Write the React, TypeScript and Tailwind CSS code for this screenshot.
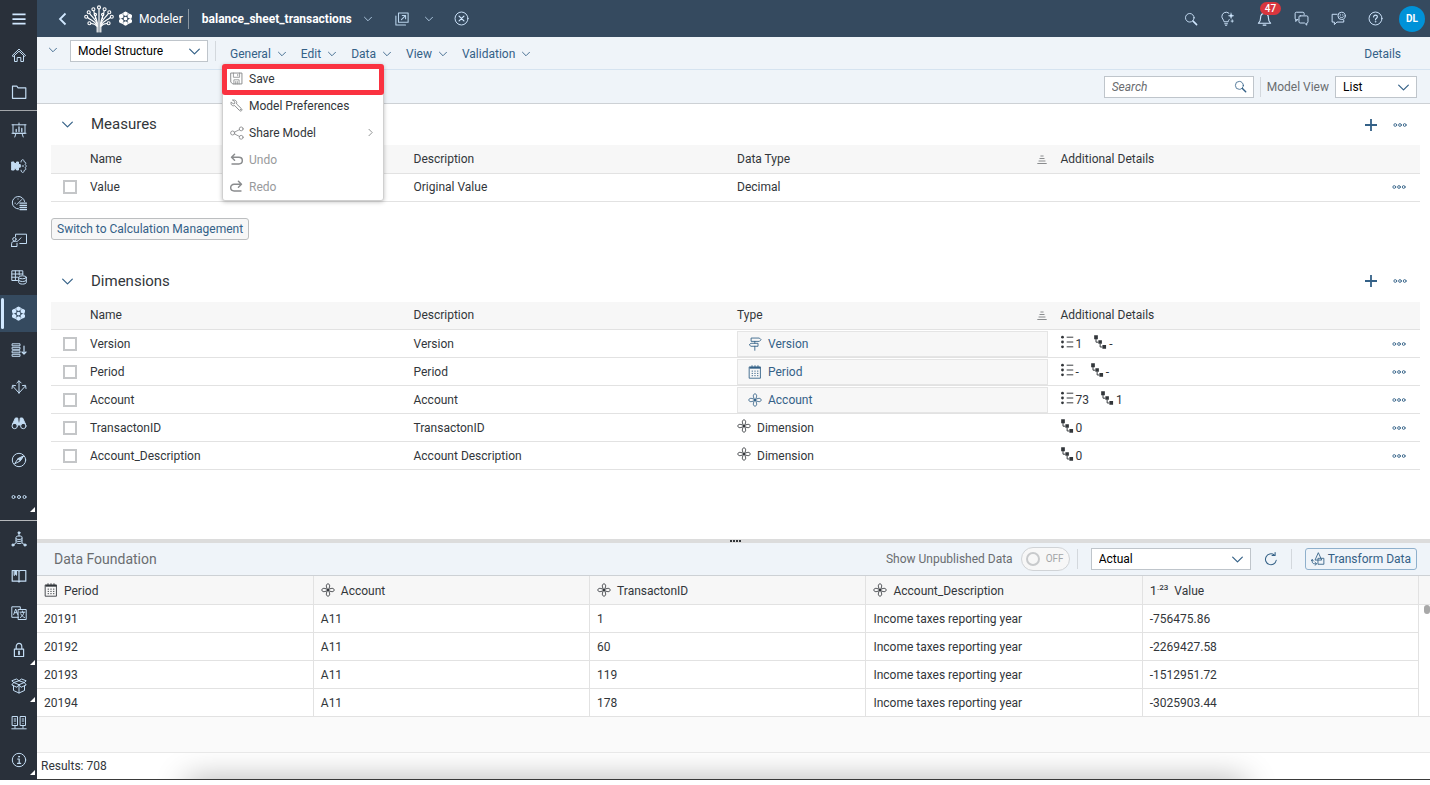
import { useState, type ReactNode } from 'react';
import clsx from 'clsx';

interface IconProps {
  className?: string;
}

function Svg({ className = 'size-4', children }: IconProps & { children: ReactNode }) {
  return (
    <svg
      viewBox="0 0 16 16"
      className={clsx('shrink-0', className)}
      fill="none"
      stroke="currentColor"
      strokeWidth="1"
      strokeLinecap="round"
      strokeLinejoin="round"
      aria-hidden="true"
    >
      {children}
    </svg>
  );
}

// General purpose icons

function ChevronDown({ className = 'w-2 h-2' }: IconProps) {
  return (
    <svg viewBox="0 0 10 6" className={clsx('shrink-0', className)} fill="none" stroke="currentColor" strokeLinecap="round" strokeLinejoin="round" aria-hidden="true">
      <path d="M0.6 0.8 5 5.2 9.4 0.8" strokeWidth="1.1" />
    </svg>
  );
}

function MoreIcon({ className }: IconProps) {
  return (
    <Svg className={className}>
      <circle cx="2.6" cy="8" r="1.6" />
      <circle cx="8" cy="8" r="1.6" />
      <circle cx="13.4" cy="8" r="1.6" />
    </Svg>
  );
}

function PlusIcon({ className }: IconProps) {
  return (
    <Svg className={className}>
      <path d="M8 2v12M2 8h12" strokeWidth="1.8" strokeLinecap="butt" />
    </Svg>
  );
}

function SearchIcon({ className }: IconProps) {
  return (
    <Svg className={className}>
      <circle cx="6.6" cy="6.6" r="4.9" />
      <path d="m10.4 10.4 4 4" strokeWidth="1.8" />
    </Svg>
  );
}

function FlowerIcon({ className }: IconProps) {
  return (
    <Svg className={className}>
      <path d="M8 8C6.800 6.400 6.100 4.800 6.100 3.200 6.100 1.900 6.900 1 8 1s1.900.9 1.900 2.200C9.900 4.800 9.200 6.400 8 8Z" />
      <path d="M8 8c-1.200 1.600-1.900 3.200-1.900 4.800C6.100 14.100 6.900 15 8 15s1.900-.9 1.900-2.200C9.900 11.200 9.200 9.600 8 8Z" />
      <path d="M8 8C6.400 6.800 4.800 6.100 3.200 6.100 1.900 6.100 1 6.900 1 8s.9 1.900 2.200 1.900C4.800 9.900 6.400 9.200 8 8Z" />
      <path d="M8 8c1.600-1.200 3.200-1.900 4.800-1.900 1.300 0 2.200.8 2.200 1.900s-.9 1.900-2.200 1.900C11.200 9.900 9.600 9.200 8 8Z" />
    </Svg>
  );
}

function CalendarIcon({ className }: IconProps) {
  return (
    <Svg className={className}>
      <path d="M1.800 2.200h12.400v12.900H1.800z" />
      <path d="M1.800 3.200h12.400" strokeWidth="2" strokeLinecap="butt" />
      <path d="M4.600.7v1.500M8 .7v1.500M11.400.7v1.500" />
      <path d="M4.200 7h1.400M7.300 7h1.400M10.400 7h1.400M4.200 9.600h1.400M7.300 9.600h1.400M10.400 9.600h1.400M4.200 12.200h1.400M7.300 12.200h1.400M10.400 12.200h1.400" strokeWidth="1.100" strokeLinecap="butt" />
    </Svg>
  );
}

function SignpostIcon({ className }: IconProps) {
  return (
    <Svg className={className}>
      <path d="M4 1.200h9l1.900 1.900L13 5H4z" />
      <path d="M11 7.200H3.400L1.400 8.900l2 1.700H11z" />
      <path d="M7.800 5v2.200M7.800 10.600v4.600" />
    </Svg>
  );
}

function BulletListIcon({ className }: IconProps) {
  return (
    <Svg className={className}>
      <g fill="currentColor" stroke="none">
        <circle cx="1.700" cy="2.500" r="1.600" />
        <circle cx="1.700" cy="8" r="1.600" />
        <circle cx="1.700" cy="13.500" r="1.600" />
      </g>
      <path d="M6.500 2.500H14M6.500 8H14M6.500 13.500H14" strokeWidth="1.100" strokeLinecap="butt" />
    </Svg>
  );
}

function HierarchyIcon({ className }: IconProps) {
  return (
    <Svg className={className}>
      <g fill="currentColor" stroke="none">
        <path d="M.2.400h4.200v4.400H.2zM5 6h4v4H5zM9.600 11.400h4.200v4.400H9.600z" />
      </g>
      <path d="M2.300 4.600v3.600H5M7 10v3.700h2.600" strokeWidth="1.100" strokeLinecap="butt" />
    </Svg>
  );
}

function SortIcon({ className }: IconProps) {
  return (
    <Svg className={className}>
      <path d="M5.500 3.200h5M4 7.200h8M2.500 11.200h11M.500 15.200h15" strokeWidth="1.600" strokeLinecap="butt" />
    </Svg>
  );
}

function RefreshIcon({ className }: IconProps) {
  return (
    <Svg className={className}>
      <path d="M14 9.400A6.200 6.200 0 1 1 11.700 3.400" strokeWidth="1.200" />
      <path d="M9.200 3.900h3.500V.6" strokeWidth="1.200" />
    </Svg>
  );
}

function TransformIcon({ className }: IconProps) {
  return (
    <Svg className={className}>
      <path d="M8.200 1.200 4.600 9.200h7.200z" />
      <path d="M8.400 7.200h6.300V14H8.400z" />
      <path d="M1.400 8.800v1.800c0 1.900 1 2.900 2.900 2.900h1.900M4.600 11.800l1.800 1.700-1.800 1.700" />
      <path d="M.2 10.200l1.200-1.600 1.300 1.600" />
    </Svg>
  );
}

// Shell header icons

function TreeLogo() {
  return (
    <svg viewBox="0 0 30 28" className="w-[30px] h-7 shrink-0" fill="none" stroke="currentColor" strokeWidth="1.200" strokeLinecap="round" aria-hidden="true">
      <path d="M15 4v23M13.200 27V17.500C12.500 13.500 10.500 10.500 9.800 6M16.800 27V17.500c.7-4 2.700-7 3.400-11.500" />
      <path d="M13.200 19C12 14.500 8.500 12.500 5.600 8.500M16.800 19c1.200-4.500 4.700-6.500 7.600-10.500" />
      <path d="M13.200 20.500C11 16 7 15.500 3.600 12.500M16.800 20.500c2.200-4.500 6.200-5 9.600-8" />
      <path d="M13.200 21.500C11 18.500 9 18.500 7 18.500M16.800 21.500c2.200-3 4.200-3 6.200-3" />
      <path d="M11.500 13.500V11M18.500 13.500V11" />
      <g strokeWidth="1.100">
        <circle cx="15" cy="2.400" r="1.500" />
        <circle cx="9.400" cy="4.300" r="1.500" />
        <circle cx="20.600" cy="4.300" r="1.500" />
        <circle cx="4.700" cy="7.200" r="1.500" />
        <circle cx="25.300" cy="7.200" r="1.500" />
        <circle cx="2.200" cy="11.800" r="1.500" />
        <circle cx="27.800" cy="11.800" r="1.500" />
        <circle cx="5.400" cy="18.200" r="1.500" />
        <circle cx="24.600" cy="18.200" r="1.500" />
        <circle cx="11.300" cy="9.600" r="1.200" />
        <circle cx="18.700" cy="9.600" r="1.200" />
      </g>
    </svg>
  );
}

// Six hexagonal nodes packed around a seventh one
function ModelerIcon({ className }: IconProps) {
  return (
    <Svg className={className}>
      <g fill="currentColor" stroke="none">
        <path d="m8 .400 2.300 1.300v2.500L8 5.400 5.700 4.200V1.700z" />
        <path d="m12.600 3 2.300 1.300v2.500l-2.300 1.300-2.300-1.300V4.300z" />
        <path d="m12.600 8.300 2.300 1.300v2.500l-2.300 1.300-2.300-1.300V9.600z" />
        <path d="m8 10.800 2.300 1.300v2.500L8 15.800l-2.300-1.200v-2.500z" />
        <path d="m3.400 8.300 2.300 1.300v2.500l-2.300 1.300-2.300-1.300V9.600z" />
        <path d="m3.400 3 2.300 1.300v2.500L3.400 8.100 1.100 6.800V4.300z" />
        <path d="m8 6 1.800 1v2.200L8 10.200l-1.800-1V7z" />
      </g>
      <path d="m5.700 2.600-1.800 1M10.300 2.600l1.800 1M13.600 7v2.400M2.400 7v2.400M5.700 13.600l-1.800-1M10.300 13.600l1.800-1" strokeWidth="1.200" strokeLinecap="butt" />
    </Svg>
  );
}

function OpenWindowIcon({ className }: IconProps) {
  return (
    <Svg className={className}>
      <path d="M4 1.200h11v10.600H4z" strokeWidth="1.200" />
      <path d="M1 4.500v10.300h11" strokeWidth="1.200" />
      <path d="M7.300 8.800 11.700 4.400M8.300 4h3.800v3.800" strokeWidth="1.200" />
    </Svg>
  );
}

function CloseCircleIcon({ className }: IconProps) {
  return (
    <Svg className={className}>
      <circle cx="8" cy="8" r="6.900" />
      <path d="m5.400 5.400 5.200 5.200M10.600 5.400l-5.200 5.200" strokeWidth="1.300" />
    </Svg>
  );
}

function BulbIcon({ className }: IconProps) {
  return (
    <Svg className={className}>
      <path d="M9.500 2.300A4.600 4.600 0 0 0 2 6c0 2 1.900 3 2.300 5.500h4.400c.2-1 .6-1.700 1.100-2.400" />
      <path d="M5 13.600h3M5.800 15.200h1.400" />
      <path d="M11.800 2l.8 2.300 2.300.8-2.300.8-.8 2.300-.8-2.300-2.300-.8 2.300-.8z" fill="currentColor" strokeWidth="0.300" />
      <path d="M13 9l.4 1.300 1.300.4-1.300.4-.4 1.300-.4-1.300-1.300-.4 1.300-.4z" fill="currentColor" strokeWidth="0.300" />
    </Svg>
  );
}

function BellIcon({ className }: IconProps) {
  return (
    <Svg className={className}>
      <path d="M1.500 13c1.700-1.200 2.300-2.600 2.300-5.500C3.800 4.500 5.500 2.500 8 2.500s4.200 2 4.200 5c0 2.900.6 4.300 2.300 5.500z" strokeWidth="1.200" />
      <path d="M6.500 15h3" strokeWidth="1.200" />
    </Svg>
  );
}

function ChatIcon({ className }: IconProps) {
  return (
    <Svg className={className}>
      <path d="M3.800 9.200H2.500c-.8 0-1.300-.5-1.300-1.300V2.600c0-.8.5-1.300 1.300-1.300h7c.8 0 1.300.5 1.300 1.300v1.200" />
      <path d="M1.900 9.200v2l2-2" />
      <path d="M6.600 5.200h7c.8 0 1.300.5 1.300 1.300v5c0 .8-.5 1.300-1.300 1.300v2.300l-2.400-2.300H6.600c-.8 0-1.300-.5-1.300-1.300v-5c0-.8.500-1.300 1.300-1.300z" />
    </Svg>
  );
}

function FeedbackIcon({ className }: IconProps) {
  return (
    <Svg className={className}>
      <path d="M6.500 3.500H1.200v8.300h2.400v2.700l2.700-2.700h7.300v-2" />
      <circle cx="11.300" cy="5.200" r="3.900" />
      <path d="M9.400 6.200c.9 1.300 2.900 1.300 3.800 0" />
      <path d="M10 4v.3M12.600 4v.3" strokeWidth="1.200" />
    </Svg>
  );
}

function HelpIcon({ className }: IconProps) {
  return (
    <Svg className={className}>
      <circle cx="8" cy="8" r="6.900" />
      <path d="M6 6.400c0-1.300.8-2 2-2s2 .7 2 1.800c0 1.500-2 1.500-2 3.200" strokeWidth="1.200" />
      <circle cx="8" cy="11.500" r="0.500" fill="currentColor" strokeWidth="0.500" />
    </Svg>
  );
}

// Menu icons

function SaveIcon({ className }: IconProps) {
  return (
    <Svg className={className}>
      <path d="M1.300 1.300h13.400v13.400H3.300l-2-2z" strokeWidth="1.200" />
      <path d="M4.200 1.300v5.200h7.600V1.300M9.500 3v1.800" />
      <path d="M4.800 14.700V9.600h6.400v5.100M7 11.800v2.900M9 11.800v2.900" />
    </Svg>
  );
}

function WrenchIcon({ className }: IconProps) {
  return (
    <Svg className={className}>
      <path d="M3.600 1.400 6 3.800 5.700 5.600l-1.800.4L1.500 3.600C.8 5.600 1.400 7.300 2.800 8c1 .5 2 .5 3 .1l6 6.200c.8.800 1.800.7 2.400.1.700-.7.700-1.700-.1-2.500L8 6c.4-1.100.4-2.200-.2-3.200C7 1.500 5.500.8 3.600 1.400z" strokeWidth="1.200" />
      <circle cx="12.900" cy="13" r="0.400" />
    </Svg>
  );
}

function ShareIcon({ className }: IconProps) {
  return (
    <Svg className={className}>
      <circle cx="3" cy="8" r="2.300" />
      <circle cx="12.800" cy="3.300" r="2.200" />
      <circle cx="12.800" cy="12.900" r="2.200" />
      <path d="m5.100 7 5.700-2.800M5.100 9l5.800 3" />
    </Svg>
  );
}

function UndoIcon({ className }: IconProps) {
  return (
    <Svg className={className}>
      <path d="M2 5.200h9a3.900 3.900 0 0 1 0 8.300H2.500M5.600 1.600 1.900 5.200l3.700 3.600" strokeWidth="1.800" />
    </Svg>
  );
}

function RedoIcon({ className }: IconProps) {
  return (
    <Svg className={className}>
      <path d="M14 5.200H5a3.900 3.900 0 0 0 0 8.300h8.500M10.400 1.600l3.700 3.600-3.700 3.600" strokeWidth="1.800" />
    </Svg>
  );
}

// Side navigation

interface NavItem {
  label: string;
  icon: ReactNode;
  expandable?: boolean;
}

const mainNav: NavItem[] = [
  {
    label: 'Home',
    icon: <path d="M1.400 8.500 8 2l6.600 6.500-1 .9L8 4.200 2.400 9.400zM3.500 9v5.500h2.700v-4h3.600v4h2.700V9" />,
  },
  { label: 'Files', icon: <path d="M1.500 14.300V2.200h4.300l1.300 1.700h7.700v10.400z" strokeWidth="1.200" /> },
];

const appNav: NavItem[] = [
  {
    label: 'Stories',
    icon: (
      <>
        <path d="M1 2.800h14M2 2.800v8.500h12V2.800M1 11.300h14M8 1v1.800M5 11.300 3.800 15M11 11.300l1.200 3.700" />
        <path d="M5.200 9.500V7.500M8 9.500V5M10.800 9.500V6.500" strokeWidth="1.300" />
      </>
    ),
  },
  {
    label: 'Analytic Applications',
    icon: (
      <>
        <path d="M1 4h2v1.500h2.500V4h2v2.600h1.800v2.600H7.500V12h-2v-1.200H3.200V12H1z" fill="currentColor" />
        <path d="M10 4c0-3 3.200-3 3.200-.2 1.700.3 2.100 1.500 1 2.700 1.300 1 1.300 2.200 0 3.200 1.100 1.200.7 2.400-1 2.700 0 2.800-3.200 2.800-3.200-.2M11.200 8h1.400" />
      </>
    ),
  },
  {
    label: 'Data Analyzer',
    icon: (
      <>
        <path d="M7.500 13.900A6.200 6.200 0 1 1 13.600 6.500M5.800 9.500l5-5M4 8.200h.4M7 3.800v.3" />
        <path d="M9 8.200h6.500M9 10.300h6.500M9 12.400h6.500M9 14.500h6.500" strokeWidth="1.300" />
      </>
    ),
  },
  {
    label: 'Digital Boardroom',
    icon: (
      <>
        <path d="M4.500 4.500V2.200h11v9.300H8.800" />
        <circle cx="3.400" cy="7.200" r="1.700" />
        <path d="M.6 14.500v-2.800c0-1.500 1-2.200 2.600-2.200 2 0 3 .2 4-.8L10 5.800M6 11.300v3.200H.6" />
      </>
    ),
  },
  {
    label: 'Datasets',
    icon: (
      <>
        <path d="M6.500 11.500H.8V1.800h11v4M.8 5h11M.8 8.200h5.700M4.400 1.800v9.700M8.200 1.800V6" />
        <ellipse cx="11.500" cy="8.300" rx="3.800" ry="1.500" />
        <path d="M7.700 8.300v5.200c0 .9 1.700 1.600 3.800 1.600s3.800-.7 3.800-1.600V8.300M7.700 11c0 .8 1.700 1.500 3.800 1.500s3.800-.7 3.800-1.500" />
      </>
    ),
  },
  { label: 'Modeler', icon: null },
  {
    label: 'Data Actions',
    icon: (
      <>
        <path d="M1.500 1.800h7.500v2H1.500zM1.500 5.300h7.500v2H1.500zM1.500 8.800h7.500v2H1.500zM1.500 12.300h7.500v2H1.500z" />
        <path d="M13 4v8M11 10l2 2 2-2" strokeWidth="1.200" />
      </>
    ),
  },
  {
    label: 'Allocations',
    icon: (
      <path d="M8 2v12M5.800 4 8 1.800 10.200 4M8 14 1.800 7.200M8 14l6.200-6.800M1 9.500 1.500 6.300l3 .3M15 9.500l-.5-3.200-3 .3" />
    ),
  },
  {
    label: 'Explorer',
    icon: (
      <>
        <circle cx="3.700" cy="11" r="2.700" />
        <circle cx="12.300" cy="11" r="2.700" />
        <path d="M1.600 9 4.400 3h2.300l.6 5h1.400l.6-5h2.300l2.800 6c-1.400-1.300-3.600-1-4.900 1h-3C5.200 8 3 7.700 1.600 9z" fill="currentColor" />
      </>
    ),
  },
  {
    label: 'Discover',
    icon: (
      <>
        <circle cx="8" cy="8" r="6.700" />
        <path d="M12.400 4.200 9.200 9 3.600 11.800l3.200-4.800z" />
        <path d="M12.400 4.200 9.200 9 6.800 7z" fill="currentColor" strokeWidth="0.500" />
      </>
    ),
  },
  {
    label: 'More',
    expandable: true,
    icon: (
      <>
        <circle cx="2.500" cy="8" r="1.500" />
        <circle cx="8" cy="8" r="1.500" />
        <circle cx="13.500" cy="8" r="1.500" />
      </>
    ),
  },
];

const adminNav: NavItem[] = [
  {
    label: 'Connections',
    icon: (
      <>
        <path d="M8 1.800V5M4.800 12 2.500 13.800M11.200 12l2.300 1.800" />
        <path d="M5 6c0-1.500 6-1.500 6 0v5.500c0 1.500-6 1.500-6 0zM5 7.800c1 1 5 1 6 0M5 9.800c1 1 5 1 6 0" />
        <circle cx="8" cy="1.800" r="1" fill="currentColor" />
        <circle cx="2" cy="14" r="1.100" fill="currentColor" />
        <circle cx="14" cy="14" r="1.100" fill="currentColor" />
      </>
    ),
  },
  {
    label: 'Catalog',
    icon: (
      <>
        <path d="M1.200 2.500H7l1 .8 1-.8h5.800v10.700H9l-1 .8-1-.8H1.200zM8 3.300V14" strokeWidth="1.200" />
        <path d="M3.400 2.500h2.200v4.800L4.500 6.300l-1.100 1z" fill="currentColor" />
      </>
    ),
  },
  {
    label: 'Translation',
    icon: (
      <>
        <path d="M7.500 12.300H.8V1.800h8.500v2.700" />
        <path d="m2.700 9.500 2-5.500 2 5.500M3.400 7.700H6" />
        <path d="M7.500 4.500h7.700v10H7.500zM9 7.200h4.800M11.400 6v1.200M9.400 12.500c2-1 3.200-3 3.400-5.300M9.800 8.800c.8 1.800 2 3 3.700 3.700" />
      </>
    ),
  },
  {
    label: 'Security',
    expandable: true,
    icon: (
      <>
        <path d="M3.400 7.200h9.200v7.300H3.400zM5.200 7.200V4.700c0-2 1.100-3.300 2.800-3.300s2.800 1.300 2.800 3.300v2.500" strokeWidth="1.200" />
        <path d="M8 9.500v2.800" strokeWidth="1.800" />
      </>
    ),
  },
  {
    label: 'Deployment',
    expandable: true,
    icon: (
      <path d="M8 6.700 2.700 4.500.8 7 6 9.300 8 6.700l2 2.600L15.200 7l-1.900-2.500L8 6.700M2.500 8v4.500L8 15l5.500-2.500V8M8 8v7M2.700 4.500.8 2.800 5.500 1 8 2.800 10.500 1l4.700 1.800-1.900 1.700M8 2.800 2.700 4.500M8 2.800l5.300 1.700" />
    ),
  },
  {
    label: 'Data Administration',
    icon: (
      <>
        <path d="M1.500 1.500h5v9h-5zM9.500 1.500h5v9h-5zM4 10.500V13M12 10.500V13M.8 13.800h14.400" />
        <path d="M3.200 4h1.600M3.200 6h1.600M11.200 4h1.600M11.200 6h1.600M4 8.500v.2M12 8.500v.2" />
      </>
    ),
  },
  {
    label: 'About',
    expandable: true,
    icon: (
      <>
        <circle cx="8" cy="8" r="6.700" />
        <path d="M6.700 7h1.500v4.300M6.500 11.300h3.200" strokeWidth="1.200" />
        <circle cx="8" cy="4.700" r="0.500" fill="currentColor" />
      </>
    ),
  },
];

function NavButton({ item, selected }: { item: NavItem; selected?: boolean }) {
  return (
    <button
      type="button"
      aria-label={item.label}
      className={clsx(
        'relative flex flex-1 w-full items-center justify-center',
        selected ? 'bg-[#354a5f] text-[#d1e8ff]' : 'text-[#c3dcf3]'
      )}
    >
      {selected && <span className="absolute left-[1px] inset-y-[3px] w-[3px] rounded-sm bg-[#d1e8ff]" />}
      {item.icon ? <Svg className="size-4">{item.icon}</Svg> : <ModelerIcon className="size-[15px]" />}
      {item.expandable && (
        <svg viewBox="0 0 5 5" className="absolute right-[2px] bottom-[3px] size-[5px]" fill="#ffffff" aria-hidden="true">
          <path d="M5 0v5H0z" />
        </svg>
      )}
    </button>
  );
}

function SideNav() {
  return (
    <nav className="flex flex-col w-[37px] shrink-0 bg-[#29303a] pb-[2px]" aria-label="Main">
      <button type="button" aria-label="Menu" className="flex h-[37px] shrink-0 items-center justify-center text-[#d1e8ff]">
        <Svg className="size-[14px]">
          <path d="M.5 2.700h15M.5 8h15M.5 13.300h15" strokeWidth="2" strokeLinecap="butt" />
        </Svg>
      </button>
      {mainNav.map((item) => (
        <NavButton key={item.label} item={item} />
      ))}
      <div className="h-px shrink-0 bg-[#a3a6aa]" />
      {appNav.map((item) => (
        <NavButton key={item.label} item={item} selected={item.label === 'Modeler'} />
      ))}
      <div className="mt-[5px] h-px shrink-0 bg-[#b5b8bb]" />
      {adminNav.map((item) => (
        <NavButton key={item.label} item={item} />
      ))}
    </nav>
  );
}

function ShellHeader() {
  const actions = [
    { label: 'Search', icon: <SearchIcon className="size-[14px]" /> },
    { label: 'Insights', icon: <BulbIcon className="size-[15px]" /> },
    { label: 'Notifications', icon: <BellIcon className="size-[15px]" />, badge: '47' },
    { label: 'Discussions', icon: <ChatIcon className="size-[15px]" /> },
    { label: 'Feedback', icon: <FeedbackIcon className="size-[15px]" /> },
    { label: 'Help', icon: <HelpIcon className="size-[15px]" /> },
  ];
  return (
    <header className="flex h-[37px] shrink-0 items-center bg-[#354a5f] pl-[21px] pr-[5px] text-white">
      <button type="button" aria-label="Back" className="w-[10px]">
        <svg viewBox="0 0 10 14" className="w-[10px] h-[14px]" fill="none" stroke="#d1e8ff" strokeWidth="1.800" aria-hidden="true">
          <path d="M7.500 1.500 2 7l5.500 5.500" />
        </svg>
      </button>
      <div className="flex items-center ml-4">
        <TreeLogo />
        <ModelerIcon className="size-[15px] ml-1" />
        <span className="ml-[6px] text-xs">Modeler</span>
      </div>
      <div className="mx-[5px] h-5 w-px bg-[#8995a0]" />
      <h1 className="ml-2 text-xs font-bold">balance_sheet_transactions</h1>
      <button type="button" aria-label="Switch model" className="ml-3 text-[#b9d4ec]">
        <ChevronDown className="w-2 h-[6px]" />
      </button>
      <button type="button" aria-label="Open in new window" className="ml-[23px] text-[#b9d4ec]">
        <OpenWindowIcon className="size-[14px]" />
      </button>
      <button type="button" aria-label="Window options" className="ml-4 text-[#b9d4ec]">
        <ChevronDown className="w-2 h-[6px]" />
      </button>
      <button type="button" aria-label="Close" className="ml-[21px] text-[#d1e8ff]">
        <CloseCircleIcon className="size-[15px]" />
      </button>
      <div className="flex ml-auto items-center">
        {actions.map((action) => (
          <button
            key={action.label}
            type="button"
            aria-label={action.label}
            className="relative flex w-[37px] h-[37px] items-center justify-center text-[#d1e8ff]"
          >
            {action.icon}
            {action.badge && (
              <span className="absolute left-3.5 top-0.5 flex h-[13px] w-[21px] items-center justify-center rounded-full bg-[#d9363e] text-[10px] font-medium text-white">
                {action.badge}
              </span>
            )}
          </button>
        ))}
        <button type="button" className="ml-[5px] size-[26px] rounded-full bg-[#0092d8] text-[10px] font-bold text-white">
          DL
        </button>
      </div>
    </header>
  );
}

interface SelectBoxProps {
  id: string;
  label: string;
  options: string[];
  className?: string;
}

function SelectBox({ id, label, options, className }: SelectBoxProps) {
  return (
    <div className={clsx('relative h-[22px]', className)}>
      <select
        id={id}
        aria-label={label}
        className="block size-full appearance-none border border-[#bfc5cb] bg-white pl-[7px] pr-6 text-xs leading-5 text-black outline-none"
      >
        {options.map((option) => (
          <option key={option}>{option}</option>
        ))}
      </select>
      <ChevronDown className="pointer-events-none absolute right-2 top-2 w-[11px] h-[7px] text-[#346187]" />
    </div>
  );
}

const generalMenu = [
  { label: 'Save', icon: <SaveIcon className="size-[13px]" />, highlighted: true },
  { label: 'Model Preferences', icon: <WrenchIcon className="size-[13px]" /> },
  { label: 'Share Model', icon: <ShareIcon className="size-[14px]" />, submenu: true },
  { label: 'Undo', icon: <UndoIcon className="size-[13px]" />, disabled: true },
  { label: 'Redo', icon: <RedoIcon className="size-[13px]" />, disabled: true },
];

function GeneralMenu() {
  return (
    <ul
      role="menu"
      className="absolute -left-2 top-[18px] z-10 w-[162px] rounded-[3px] border border-[#d0d0d0] bg-white shadow-[0_1px_4px_rgba(0,0,0,0.25)]"
    >
      {generalMenu.map((item) => (
        <li key={item.label} role="none" className="relative">
          <button
            type="button"
            role="menuitem"
            disabled={item.disabled}
            className={clsx(
              'flex h-[27px] w-full items-center px-[6px] text-xs',
              item.disabled ? 'text-[#989a9c]' : 'text-[#32363a]'
            )}
          >
            <span className="flex w-[15px] justify-center text-[#8a8c8e]">{item.icon}</span>
            <span className="ml-[5px]">{item.label}</span>
            {item.submenu && (
              <svg viewBox="0 0 6 10" className="ml-auto mr-1 w-[5px] h-[9px]" fill="none" stroke="#7c7e80" aria-hidden="true">
                <path d="M.8.8 5 5 .8 9.200" />
              </svg>
            )}
          </button>
          {item.highlighted && (
            <span className="pointer-events-none absolute -inset-x-px -top-px h-[31px] rounded-[3px] border-[5px] border-[#fa3240]" />
          )}
        </li>
      ))}
    </ul>
  );
}

function MenuBar() {
  const [open, setOpen] = useState('General');
  const menus = ['General', 'Edit', 'Data', 'View', 'Validation'];
  return (
    <div className="flex gap-[15px]">
      {menus.map((menu) => (
        <div key={menu} className="relative">
          <button
            type="button"
            aria-expanded={open === menu}
            onClick={() => setOpen(open === menu ? '' : menu)}
            className="flex items-center gap-[7px] text-xs leading-4 text-[#346187]"
          >
            {menu}
            <ChevronDown className="w-2 h-[6px]" />
          </button>
          {menu === 'General' && open === menu && <GeneralMenu />}
        </div>
      ))}
    </div>
  );
}

function Toolbars() {
  return (
    <>
      <div className="flex h-[33px] shrink-0 items-start border-b border-[#d5e3f0] bg-[#eff4f9] pl-3 pr-[29px]">
        <button type="button" aria-label="Collapse toolbar" className="flex h-[26px] items-center text-[#346187]">
          <ChevronDown className="w-2 h-[6px]" />
        </button>
        <SelectBox id="workspace" label="Workspace" options={['Model Structure', 'Calculations']} className="ml-[13px] mt-[3px] w-[138px]" />
        <div className="ml-[7px] mr-3.5 mt-1 h-5 w-px bg-[#d3d8dd]" />
        <div className="flex flex-1 items-center justify-between pt-[9px]">
          <MenuBar />
          <a href="#details" className="text-xs text-[#346187]">
            Details
          </a>
        </div>
      </div>
      <div className="flex h-[34px] shrink-0 items-center justify-end border-b border-[#cdd1d5] bg-[#eff4f9] pr-[13px]">
        <div className="relative w-[150px] h-[22px]">
          <input
            type="search"
            aria-label="Search"
            placeholder="Search"
            className="block size-full appearance-none border border-[#bfc5cb] bg-white pl-[7px] pr-6 text-xs placeholder:italic placeholder:text-[#6a6d70] outline-none"
          />
          <SearchIcon className="pointer-events-none absolute right-[7px] top-1 size-[13px] text-[#346187]" />
        </div>
        <div className="mx-[6px] h-5 w-px bg-[#d3d8dd]" />
        <label htmlFor="model-view" className="text-xs text-[#6a6d70]">
          Model View
        </label>
        <SelectBox id="model-view" label="Model View" options={['List', 'Diagram']} className="ml-[6px] w-[82px]" />
      </div>
    </>
  );
}

function SectionHeader({ title }: { title: string }) {
  return (
    <div className="flex h-[41px] items-center text-[#346187]">
      <button type="button" aria-label={`Collapse ${title}`} className="ml-[11px] w-[11px]">
        <ChevronDown className="w-[11px] h-[7px]" />
      </button>
      <h2 className="ml-[18px] text-[15px] text-[#32363a]">{title}</h2>
      <button type="button" aria-label={`Add to ${title}`} className="ml-auto">
        <PlusIcon className="size-4" />
      </button>
      <button type="button" aria-label={`${title} options`} className="ml-[14px] mr-[13px]">
        <MoreIcon className="size-[14px]" />
      </button>
    </div>
  );
}

interface Row {
  name: string;
  description: string;
  type: ReactNode;
  details?: ReactNode;
}

function StructureTable({ typeLabel, rows }: { typeLabel: string; rows: Row[] }) {
  return (
    <table className="w-full table-fixed border-collapse text-left text-xs text-[#32363a]">
      <colgroup>
        <col className="w-[39px]" />
        <col />
        <col />
        <col />
        <col />
        <col className="w-9" />
      </colgroup>
      <thead>
        <tr className="h-7 border-b border-[#e2e2e2] bg-[#f7f7f7]">
          <th aria-label="Select" />
          <th className="font-normal">Name</th>
          <th className="font-normal">Description</th>
          <th className="font-normal">
            <span className="flex items-center justify-between pr-[14px]">
              {typeLabel}
              <SortIcon className="size-[10px] text-[#8a8c8e]" />
            </span>
          </th>
          <th className="font-normal">Additional Details</th>
          <th aria-label="Options" />
        </tr>
      </thead>
      <tbody>
        {rows.map((row) => (
          <tr key={row.name} className="h-7 border-b border-[#e2e2e2]">
            <td>
              <input
                type="checkbox"
                aria-label={`Select ${row.name}`}
                className="ml-3 block size-[14px] appearance-none border-2 border-[#c4c6c8] bg-white checked:bg-[#346187]"
              />
            </td>
            <td>{row.name}</td>
            <td>{row.description}</td>
            <td>{row.type}</td>
            <td>{row.details}</td>
            <td>
              <button type="button" aria-label={`${row.name} options`} className="ml-2 block text-[#346187]">
                <MoreIcon className="size-[14px]" />
              </button>
            </td>
          </tr>
        ))}
      </tbody>
    </table>
  );
}

function TypeButton({ icon, children }: { icon: ReactNode; children: string }) {
  return (
    <button
      type="button"
      className="flex h-[26px] w-[calc(100%-13px)] items-center gap-[6px] border border-[#e5e5e5] bg-[#f7f7f7] pl-[10px] text-[#346187]"
    >
      {icon}
      {children}
    </button>
  );
}

function PlainType() {
  return (
    <span className="flex items-center gap-[6px]">
      <FlowerIcon className="size-[14px] mb-[3px]" />
      Dimension
    </span>
  );
}

function Details({ members, hierarchies }: { members?: string; hierarchies: string }) {
  return (
    <span className="flex items-center">
      {members && (
        <>
          <BulletListIcon className="size-[14px] mb-[3px]" />
          <span className="ml-px mr-3">{members}</span>
        </>
      )}
      <HierarchyIcon className="size-[14px] mb-[3px]" />
      <span className="ml-px">{hierarchies}</span>
    </span>
  );
}

const measures: Row[] = [{ name: 'Value', description: 'Original Value', type: 'Decimal' }];

const dimensions: Row[] = [
  {
    name: 'Version',
    description: 'Version',
    type: <TypeButton icon={<SignpostIcon className="size-[14px]" />}>Version</TypeButton>,
    details: <Details members="1" hierarchies="-" />,
  },
  {
    name: 'Period',
    description: 'Period',
    type: <TypeButton icon={<CalendarIcon className="size-[14px]" />}>Period</TypeButton>,
    details: <Details members="-" hierarchies="-" />,
  },
  {
    name: 'Account',
    description: 'Account',
    type: <TypeButton icon={<FlowerIcon className="size-[14px]" />}>Account</TypeButton>,
    details: <Details members="73" hierarchies="1" />,
  },
  { name: 'TransactonID', description: 'TransactonID', type: <PlainType />, details: <Details hierarchies="0" /> },
  {
    name: 'Account_Description',
    description: 'Account Description',
    type: <PlainType />,
    details: <Details hierarchies="0" />,
  },
];

const columns = [
  { label: 'Period', icon: <CalendarIcon className="size-[14px] mb-[3px]" /> },
  { label: 'Account', icon: <FlowerIcon className="size-[14px] mb-[3px]" /> },
  { label: 'TransactonID', icon: <FlowerIcon className="size-[14px] mb-[3px]" /> },
  { label: 'Account_Description', icon: <FlowerIcon className="size-[14px] mb-[3px]" /> },
  {
    label: 'Value',
    icon: (
      <span className="flex items-start text-[13px] leading-4">
        1<span className="text-[8px] leading-[10px] font-medium">.23</span>
      </span>
    ),
  },
];

const records = [
  ['20191', 'A11', '1', 'Income taxes reporting year', '-756475.86'],
  ['20192', 'A11', '60', 'Income taxes reporting year', '-2269427.58'],
  ['20193', 'A11', '119', 'Income taxes reporting year', '-1512951.72'],
  ['20194', 'A11', '178', 'Income taxes reporting year', '-3025903.44'],
];

function DataFoundation() {
  return (
    <section className="shrink-0">
      <div className="flex h-1 items-center justify-center gap-px bg-[#dcdcdc] pl-1">
        <span className="size-[2px] bg-[#32363a]" />
        <span className="size-[2px] bg-[#32363a]" />
        <span className="size-[2px] bg-[#32363a]" />
        <span className="size-[2px] bg-[#32363a]" />
      </div>
      <div className="flex h-[33px] items-center border-b border-[#cdd1d5] bg-[#eff4f9] pl-[17px] pr-[13px]">
        <h2 className="text-sm text-[#6a6d70]">Data Foundation</h2>
        <label className="ml-auto flex items-center gap-2 text-xs text-[#6a6d70]">
          Show Unpublished Data
          <input type="checkbox" role="switch" className="sr-only" />
          <span className="flex h-6 w-[49px] items-center gap-[6px] rounded-full border border-[#d0d3d6] bg-[#f7f7f7] pl-1 text-[10px] text-[#a4a6a8]">
            <span className="size-[14px] rounded-full border-2 border-[#c8cacc]" />
            OFF
          </span>
        </label>
        <div className="ml-[7px] mr-[13px] h-5 w-px bg-[#d3d8dd]" />
        <SelectBox id="version" label="Version" options={['Actual', 'Budget', 'Forecast']} className="w-40" />
        <button type="button" aria-label="Refresh" className="ml-[13px] text-[#346187]">
          <RefreshIcon className="size-[14px]" />
        </button>
        <div className="mx-[13px] h-5 w-px bg-[#d3d8dd]" />
        <button
          type="button"
          className="flex h-[22px] items-center gap-[3px] rounded-[3px] border border-[#8fb0cc] px-[5px] text-xs text-[#346187]"
        >
          <TransformIcon className="size-[14px]" />
          Transform Data
        </button>
      </div>
      <div className="flex bg-[#fafafa]">
        <table className="min-w-0 flex-1 table-fixed border-collapse text-left text-xs text-[#32363a]">
          <thead>
            <tr className="h-[29px] border-b border-[#e2e2e2] bg-[#f7f7f7]">
              {columns.map((column) => (
                <th key={column.label} className="w-1/5 border-r border-[#e2e2e2] px-[7px] font-normal">
                  <span className="flex items-center gap-[6px] pt-[3px]">
                    {column.icon}
                    {column.label}
                  </span>
                </th>
              ))}
            </tr>
          </thead>
          <tbody>
            {records.map((record) => (
              <tr key={record[0]} className="h-7 border-b border-[#e2e2e2] bg-white">
                {record.map((value, i) => (
                  <td key={columns[i].label} className="w-1/5 border-r border-[#e2e2e2] px-[7px]">
                    {value}
                  </td>
                ))}
              </tr>
            ))}
          </tbody>
        </table>
        <div className="flex w-[11px] flex-col items-end border-b border-[#e2e2e2] bg-white">
          <div className="h-[29px] w-full border-b border-[#e2e2e2] bg-[#f7f7f7]" />
          <div className="h-[9px] w-[6px] rounded-full bg-[#a8a8a8]" />
        </div>
      </div>
      <div className="h-[35px] bg-[#fafafa]" />
      <div className="relative flex h-[27px] items-center overflow-hidden border-t border-[#e8e8e8] bg-white pl-1 text-xs text-[#32363a]">
        <span>Results: 708</span>
        <div className="pointer-events-none absolute left-[150px] right-[185px] top-full h-8 shadow-[0_0_32px_0_rgba(0,0,0,0.3)]" />
      </div>
      <div className="h-px bg-[#3a3a3a]" />
    </section>
  );
}

export default function App() {
  return (
    <div className="flex h-screen min-h-[720px] bg-white pb-[5px] font-['Roboto','Liberation_Sans',sans-serif]">
      <SideNav />
      <div className="flex min-w-0 flex-1 flex-col">
        <ShellHeader />
        <Toolbars />
        <main className="min-h-0 flex-1 pl-3.5 pr-[10px]">
          <SectionHeader title="Measures" />
          <StructureTable typeLabel="Data Type" rows={measures} />
          <button
            type="button"
            className="mt-4 mb-[21px] flex h-[22px] items-center rounded-[3px] border border-[#bcbec0] bg-[#f7f7f7] px-[5px] text-xs text-[#346187]"
          >
            Switch to Calculation Management
          </button>
          <SectionHeader title="Dimensions" />
          <StructureTable typeLabel="Type" rows={dimensions} />
        </main>
        <DataFoundation />
      </div>
    </div>
  );
}
